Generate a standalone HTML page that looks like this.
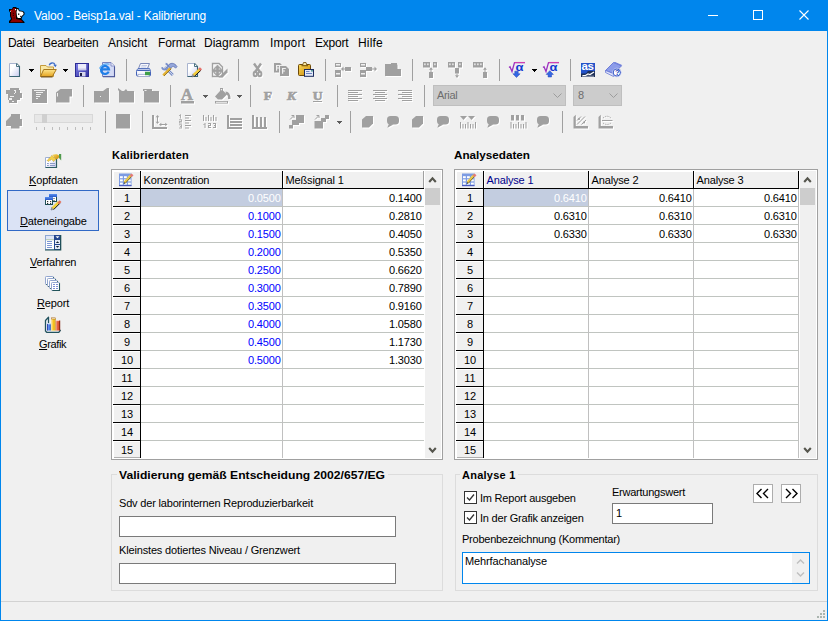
<!DOCTYPE html>
<html><head><meta charset="utf-8"><title>Valoo - Beisp1a.val - Kalibrierung</title>
<style>
html,body{margin:0;padding:0}
body{width:828px;height:621px;position:relative;overflow:hidden;background:#f0f0f0;font-family:"Liberation Sans", sans-serif;font-size:11px}
body>div,body>span,body>svg{position:absolute;display:block}
.t{white-space:nowrap}
u{text-decoration:underline;text-underline-offset:1px;text-decoration-thickness:1px}
</style></head>
<body>
<div style="left:0px;top:0px;width:828px;height:31px;background:#0086ed;"></div>
<span class="t" style="font-size:12px;line-height:16px;color:#fff;top:8px;letter-spacing:-0.153px;left:34px;">Valoo - Beisp1a.val - Kalibrierung</span>
<div style="left:708px;top:15px;width:10px;height:1px;background:#fff;"></div>
<div style="left:753px;top:10px;width:10px;height:10px;border:1px solid #fff;box-sizing:border-box"></div>
<svg style="left:799px;top:10px" width="10" height="10" viewBox="0 0 10 10"><path d="M0.5 0.5 L9.5 9.5 M9.5 0.5 L0.5 9.5" stroke="#fff" stroke-width="1.1" fill="none"/></svg>
<div style="left:0px;top:31px;width:1px;height:590px;background:#0086ed;"></div>
<div style="left:827px;top:31px;width:1px;height:590px;background:#0086ed;"></div>
<div style="left:0px;top:620px;width:828px;height:1px;background:#0086ed;"></div>
<span class="t" style="font-size:12px;line-height:16px;color:#000;top:35px;letter-spacing:-0.323px;left:8px;">Datei</span>
<span class="t" style="font-size:12px;line-height:16px;color:#000;top:35px;letter-spacing:-0.275px;left:43px;">Bearbeiten</span>
<span class="t" style="font-size:12px;line-height:16px;color:#000;top:35px;letter-spacing:-0.023px;left:108px;">Ansicht</span>
<span class="t" style="font-size:12px;line-height:16px;color:#000;top:35px;letter-spacing:-0.119px;left:158px;">Format</span>
<span class="t" style="font-size:12px;line-height:16px;color:#000;top:35px;letter-spacing:-0.005px;left:204px;">Diagramm</span>
<span class="t" style="font-size:12px;line-height:16px;color:#000;top:35px;letter-spacing:0.197px;left:270px;">Import</span>
<span class="t" style="font-size:12px;line-height:16px;color:#000;top:35px;letter-spacing:-0.215px;left:315px;">Export</span>
<span class="t" style="font-size:12px;line-height:16px;color:#000;top:35px;letter-spacing:0.157px;left:358px;">Hilfe</span>
<div style="left:126px;top:59px;width:1px;height:22px;background:#a0a0a0;"></div>
<div style="left:238px;top:59px;width:1px;height:22px;background:#a0a0a0;"></div>
<div style="left:325px;top:59px;width:1px;height:22px;background:#a0a0a0;"></div>
<div style="left:412px;top:59px;width:1px;height:22px;background:#a0a0a0;"></div>
<div style="left:499px;top:59px;width:1px;height:22px;background:#a0a0a0;"></div>
<div style="left:570px;top:59px;width:1px;height:22px;background:#a0a0a0;"></div>
<div style="left:83px;top:85px;width:1px;height:22px;background:#a0a0a0;"></div>
<div style="left:170px;top:85px;width:1px;height:22px;background:#a0a0a0;"></div>
<div style="left:250px;top:85px;width:1px;height:22px;background:#a0a0a0;"></div>
<div style="left:337px;top:85px;width:1px;height:22px;background:#a0a0a0;"></div>
<div style="left:424px;top:85px;width:1px;height:22px;background:#a0a0a0;"></div>
<div style="left:433px;top:85px;width:133px;height:21px;background:#cccccc;border:1px solid #bfbfbf;box-sizing:border-box"></div>
<span class="t" style="font-size:11px;line-height:15px;color:#6d6d6d;top:88px;letter-spacing:-0.343px;left:437px;">Arial</span>
<div style="left:573px;top:85px;width:49px;height:21px;background:#cccccc;border:1px solid #bfbfbf;box-sizing:border-box"></div>
<span class="t" style="font-size:11px;line-height:15px;color:#6d6d6d;top:88px;left:578px;">8</span>
<div style="left:34px;top:114px;width:59px;height:9px;background:#e7e7e7;border:1px solid #d8d8d8;box-sizing:border-box"></div>
<div style="left:42px;top:114px;width:5px;height:9px;background:#cfcfcf;"></div>
<div style="left:36px;top:127px;width:1px;height:3px;background:#bdbdbd;"></div>
<div style="left:44px;top:127px;width:1px;height:3px;background:#bdbdbd;"></div>
<div style="left:52px;top:127px;width:1px;height:3px;background:#bdbdbd;"></div>
<div style="left:59px;top:127px;width:1px;height:3px;background:#bdbdbd;"></div>
<div style="left:67px;top:127px;width:1px;height:3px;background:#bdbdbd;"></div>
<div style="left:75px;top:127px;width:1px;height:3px;background:#bdbdbd;"></div>
<div style="left:82px;top:127px;width:1px;height:3px;background:#bdbdbd;"></div>
<div style="left:90px;top:127px;width:1px;height:3px;background:#bdbdbd;"></div>
<div style="left:105px;top:111px;width:1px;height:22px;background:#a0a0a0;"></div>
<div style="left:142px;top:111px;width:1px;height:22px;background:#a0a0a0;"></div>
<div style="left:279px;top:111px;width:1px;height:22px;background:#a0a0a0;"></div>
<div style="left:350px;top:111px;width:1px;height:22px;background:#a0a0a0;"></div>
<div style="left:562px;top:111px;width:1px;height:22px;background:#a0a0a0;"></div>
<div style="left:7px;top:190px;width:92px;height:41px;background:#dbe3f5;border:1px solid #3169c6;box-sizing:border-box"></div>
<span class="t" style="font-size:11px;line-height:15px;color:#000;top:173px;letter-spacing:-0.151px;left:29px;"><u>K</u>opfdaten</span>
<span class="t" style="font-size:11px;line-height:15px;color:#000;top:214px;letter-spacing:-0.143px;left:20px;"><u>D</u>ateneingabe</span>
<span class="t" style="font-size:11px;line-height:15px;color:#000;top:255px;letter-spacing:-0.156px;left:30px;"><u>V</u>erfahren</span>
<span class="t" style="font-size:11px;line-height:15px;color:#000;top:296px;letter-spacing:-0.155px;left:37px;"><u>R</u>eport</span>
<span class="t" style="font-size:11px;line-height:15px;color:#000;top:337px;letter-spacing:-0.357px;left:39px;"><u>G</u>rafik</span>
<span class="t" style="font-size:11px;line-height:15px;color:#000;top:148px;font-weight:700;letter-spacing:0.217px;left:112px;">Kalibrierdaten</span>
<span class="t" style="font-size:11px;line-height:15px;color:#000;top:148px;font-weight:700;transform:scaleX(1.0625);transform-origin:0 0;left:454px;">Analysedaten</span>
<div style="left:111px;top:169px;width:332px;height:291px;background:#fff;border:1px solid #a0a0a0;box-sizing:border-box"></div>
<div style="left:113px;top:171px;width:311px;height:18px;background:#f0f0f0;"></div>
<div style="left:113px;top:171px;width:27px;height:287px;background:#f0f0f0;"></div>
<div style="left:113px;top:171px;width:310px;height:1px;background:#fff;"></div>
<div style="left:113px;top:171px;width:1px;height:17px;background:#fff;"></div>
<div style="left:141px;top:171px;width:1px;height:17px;background:#fff;"></div>
<div style="left:283px;top:171px;width:1px;height:17px;background:#fff;"></div>
<div style="left:113px;top:188px;width:311px;height:1px;background:#000;"></div>
<div style="left:140px;top:171px;width:1px;height:18px;background:#000;"></div>
<div style="left:282px;top:171px;width:1px;height:18px;background:#000;"></div>
<div style="left:423px;top:171px;width:1px;height:18px;background:#000;"></div>
<div style="left:113px;top:189px;width:27px;height:1px;background:#fff;"></div>
<div style="left:113px;top:189px;width:1px;height:17px;background:#fff;"></div>
<div style="left:113px;top:206px;width:27px;height:1px;background:#000;"></div>
<div style="left:141px;top:206px;width:283px;height:1px;background:#c0c4c0;"></div>
<span class="t" style="font-size:11px;line-height:15px;color:#000;top:191px;left:123.94px;">1</span>
<div style="left:113px;top:207px;width:27px;height:1px;background:#fff;"></div>
<div style="left:113px;top:207px;width:1px;height:17px;background:#fff;"></div>
<div style="left:113px;top:224px;width:27px;height:1px;background:#000;"></div>
<div style="left:141px;top:224px;width:283px;height:1px;background:#c0c4c0;"></div>
<span class="t" style="font-size:11px;line-height:15px;color:#000;top:209px;left:123.94px;">2</span>
<div style="left:113px;top:225px;width:27px;height:1px;background:#fff;"></div>
<div style="left:113px;top:225px;width:1px;height:17px;background:#fff;"></div>
<div style="left:113px;top:242px;width:27px;height:1px;background:#000;"></div>
<div style="left:141px;top:242px;width:283px;height:1px;background:#c0c4c0;"></div>
<span class="t" style="font-size:11px;line-height:15px;color:#000;top:227px;left:123.94px;">3</span>
<div style="left:113px;top:243px;width:27px;height:1px;background:#fff;"></div>
<div style="left:113px;top:243px;width:1px;height:17px;background:#fff;"></div>
<div style="left:113px;top:260px;width:27px;height:1px;background:#000;"></div>
<div style="left:141px;top:260px;width:283px;height:1px;background:#c0c4c0;"></div>
<span class="t" style="font-size:11px;line-height:15px;color:#000;top:245px;left:123.94px;">4</span>
<div style="left:113px;top:261px;width:27px;height:1px;background:#fff;"></div>
<div style="left:113px;top:261px;width:1px;height:17px;background:#fff;"></div>
<div style="left:113px;top:278px;width:27px;height:1px;background:#000;"></div>
<div style="left:141px;top:278px;width:283px;height:1px;background:#c0c4c0;"></div>
<span class="t" style="font-size:11px;line-height:15px;color:#000;top:263px;left:123.94px;">5</span>
<div style="left:113px;top:279px;width:27px;height:1px;background:#fff;"></div>
<div style="left:113px;top:279px;width:1px;height:17px;background:#fff;"></div>
<div style="left:113px;top:296px;width:27px;height:1px;background:#000;"></div>
<div style="left:141px;top:296px;width:283px;height:1px;background:#c0c4c0;"></div>
<span class="t" style="font-size:11px;line-height:15px;color:#000;top:281px;left:123.94px;">6</span>
<div style="left:113px;top:297px;width:27px;height:1px;background:#fff;"></div>
<div style="left:113px;top:297px;width:1px;height:17px;background:#fff;"></div>
<div style="left:113px;top:314px;width:27px;height:1px;background:#000;"></div>
<div style="left:141px;top:314px;width:283px;height:1px;background:#c0c4c0;"></div>
<span class="t" style="font-size:11px;line-height:15px;color:#000;top:299px;left:123.94px;">7</span>
<div style="left:113px;top:315px;width:27px;height:1px;background:#fff;"></div>
<div style="left:113px;top:315px;width:1px;height:17px;background:#fff;"></div>
<div style="left:113px;top:332px;width:27px;height:1px;background:#000;"></div>
<div style="left:141px;top:332px;width:283px;height:1px;background:#c0c4c0;"></div>
<span class="t" style="font-size:11px;line-height:15px;color:#000;top:317px;left:123.94px;">8</span>
<div style="left:113px;top:333px;width:27px;height:1px;background:#fff;"></div>
<div style="left:113px;top:333px;width:1px;height:17px;background:#fff;"></div>
<div style="left:113px;top:350px;width:27px;height:1px;background:#000;"></div>
<div style="left:141px;top:350px;width:283px;height:1px;background:#c0c4c0;"></div>
<span class="t" style="font-size:11px;line-height:15px;color:#000;top:335px;left:123.94px;">9</span>
<div style="left:113px;top:351px;width:27px;height:1px;background:#fff;"></div>
<div style="left:113px;top:351px;width:1px;height:17px;background:#fff;"></div>
<div style="left:113px;top:368px;width:27px;height:1px;background:#000;"></div>
<div style="left:141px;top:368px;width:283px;height:1px;background:#c0c4c0;"></div>
<span class="t" style="font-size:11px;line-height:15px;color:#000;top:353px;left:120.88px;">10</span>
<div style="left:113px;top:369px;width:27px;height:1px;background:#fff;"></div>
<div style="left:113px;top:369px;width:1px;height:17px;background:#fff;"></div>
<div style="left:113px;top:386px;width:27px;height:1px;background:#000;"></div>
<div style="left:141px;top:386px;width:283px;height:1px;background:#c0c4c0;"></div>
<span class="t" style="font-size:11px;line-height:15px;color:#000;top:371px;left:121.29px;">11</span>
<div style="left:113px;top:387px;width:27px;height:1px;background:#fff;"></div>
<div style="left:113px;top:387px;width:1px;height:17px;background:#fff;"></div>
<div style="left:113px;top:404px;width:27px;height:1px;background:#000;"></div>
<div style="left:141px;top:404px;width:283px;height:1px;background:#c0c4c0;"></div>
<span class="t" style="font-size:11px;line-height:15px;color:#000;top:389px;left:120.88px;">12</span>
<div style="left:113px;top:405px;width:27px;height:1px;background:#fff;"></div>
<div style="left:113px;top:405px;width:1px;height:17px;background:#fff;"></div>
<div style="left:113px;top:422px;width:27px;height:1px;background:#000;"></div>
<div style="left:141px;top:422px;width:283px;height:1px;background:#c0c4c0;"></div>
<span class="t" style="font-size:11px;line-height:15px;color:#000;top:407px;left:120.88px;">13</span>
<div style="left:113px;top:423px;width:27px;height:1px;background:#fff;"></div>
<div style="left:113px;top:423px;width:1px;height:17px;background:#fff;"></div>
<div style="left:113px;top:440px;width:27px;height:1px;background:#000;"></div>
<div style="left:141px;top:440px;width:283px;height:1px;background:#c0c4c0;"></div>
<span class="t" style="font-size:11px;line-height:15px;color:#000;top:425px;left:120.88px;">14</span>
<div style="left:113px;top:441px;width:27px;height:1px;background:#fff;"></div>
<div style="left:113px;top:441px;width:1px;height:17px;background:#fff;"></div>
<span class="t" style="font-size:11px;line-height:15px;color:#000;top:443px;left:120.88px;">15</span>
<div style="left:140px;top:171px;width:1px;height:287px;background:#000;"></div>
<div style="left:114px;top:457px;width:26px;height:1px;background:#b0b0b0;"></div>
<div style="left:282px;top:189px;width:1px;height:269px;background:#c0c0c0;"></div>
<div style="left:141px;top:189px;width:141px;height:17px;background:#c3cde0;"></div>
<span class="t" style="font-size:11px;line-height:15px;color:#000;top:173px;letter-spacing:-0.167px;left:143.6px;">Konzentration</span>
<span class="t" style="font-size:11px;line-height:15px;color:#000;top:173px;letter-spacing:-0.174px;left:285.6px;">Meßsignal 1</span>
<span class="t" style="font-size:11px;line-height:15px;color:#fff;top:191px;letter-spacing:-0.112px;right:547.11px;">0.0500</span>
<span class="t" style="font-size:11px;line-height:15px;color:#000;top:191px;letter-spacing:-0.112px;right:406.11px;">0.1400</span>
<span class="t" style="font-size:11px;line-height:15px;color:#0000ff;top:209px;letter-spacing:-0.112px;right:547.11px;">0.1000</span>
<span class="t" style="font-size:11px;line-height:15px;color:#000;top:209px;letter-spacing:-0.112px;right:406.11px;">0.2810</span>
<span class="t" style="font-size:11px;line-height:15px;color:#0000ff;top:227px;letter-spacing:-0.112px;right:547.11px;">0.1500</span>
<span class="t" style="font-size:11px;line-height:15px;color:#000;top:227px;letter-spacing:-0.112px;right:406.11px;">0.4050</span>
<span class="t" style="font-size:11px;line-height:15px;color:#0000ff;top:245px;letter-spacing:-0.112px;right:547.11px;">0.2000</span>
<span class="t" style="font-size:11px;line-height:15px;color:#000;top:245px;letter-spacing:-0.112px;right:406.11px;">0.5350</span>
<span class="t" style="font-size:11px;line-height:15px;color:#0000ff;top:263px;letter-spacing:-0.112px;right:547.11px;">0.2500</span>
<span class="t" style="font-size:11px;line-height:15px;color:#000;top:263px;letter-spacing:-0.112px;right:406.11px;">0.6620</span>
<span class="t" style="font-size:11px;line-height:15px;color:#0000ff;top:281px;letter-spacing:-0.112px;right:547.11px;">0.3000</span>
<span class="t" style="font-size:11px;line-height:15px;color:#000;top:281px;letter-spacing:-0.112px;right:406.11px;">0.7890</span>
<span class="t" style="font-size:11px;line-height:15px;color:#0000ff;top:299px;letter-spacing:-0.112px;right:547.11px;">0.3500</span>
<span class="t" style="font-size:11px;line-height:15px;color:#000;top:299px;letter-spacing:-0.112px;right:406.11px;">0.9160</span>
<span class="t" style="font-size:11px;line-height:15px;color:#0000ff;top:317px;letter-spacing:-0.112px;right:547.11px;">0.4000</span>
<span class="t" style="font-size:11px;line-height:15px;color:#000;top:317px;letter-spacing:-0.112px;right:406.11px;">1.0580</span>
<span class="t" style="font-size:11px;line-height:15px;color:#0000ff;top:335px;letter-spacing:-0.112px;right:547.11px;">0.4500</span>
<span class="t" style="font-size:11px;line-height:15px;color:#000;top:335px;letter-spacing:-0.112px;right:406.11px;">1.1730</span>
<span class="t" style="font-size:11px;line-height:15px;color:#0000ff;top:353px;letter-spacing:-0.112px;right:547.11px;">0.5000</span>
<span class="t" style="font-size:11px;line-height:15px;color:#000;top:353px;letter-spacing:-0.112px;right:406.11px;">1.3030</span>
<div style="left:424px;top:171px;width:17px;height:287px;background:#fff;"></div>
<div style="left:425px;top:171px;width:16px;height:287px;background:#f0f0f0;"></div>
<div style="left:425px;top:188px;width:15px;height:17px;background:#cdcdcd;"></div>
<svg style="left:428px;top:175px" width="9" height="9" viewBox="0 0 9 9"><path d="M1.2 7 L4.5 3.3 L7.8 7" stroke="#55554d" stroke-width="2.1" fill="none"/></svg>
<svg style="left:428px;top:446px" width="9" height="9" viewBox="0 0 9 9"><path d="M1.2 2 L4.5 5.7 L7.8 2" stroke="#55554d" stroke-width="2.1" fill="none"/></svg>
<div style="left:423px;top:171px;width:1px;height:17px;background:#a0a0a0;"></div>
<div style="left:454px;top:169px;width:364px;height:291px;background:#fff;border:1px solid #a0a0a0;box-sizing:border-box"></div>
<div style="left:456px;top:171px;width:343px;height:18px;background:#f0f0f0;"></div>
<div style="left:456px;top:171px;width:27px;height:287px;background:#f0f0f0;"></div>
<div style="left:456px;top:171px;width:342px;height:1px;background:#fff;"></div>
<div style="left:456px;top:171px;width:1px;height:17px;background:#fff;"></div>
<div style="left:484px;top:171px;width:1px;height:17px;background:#fff;"></div>
<div style="left:589px;top:171px;width:1px;height:17px;background:#fff;"></div>
<div style="left:694px;top:171px;width:1px;height:17px;background:#fff;"></div>
<div style="left:456px;top:188px;width:343px;height:1px;background:#000;"></div>
<div style="left:483px;top:171px;width:1px;height:18px;background:#000;"></div>
<div style="left:588px;top:171px;width:1px;height:18px;background:#000;"></div>
<div style="left:693px;top:171px;width:1px;height:18px;background:#000;"></div>
<div style="left:798px;top:171px;width:1px;height:18px;background:#000;"></div>
<div style="left:456px;top:189px;width:27px;height:1px;background:#fff;"></div>
<div style="left:456px;top:189px;width:1px;height:17px;background:#fff;"></div>
<div style="left:456px;top:206px;width:27px;height:1px;background:#000;"></div>
<div style="left:484px;top:206px;width:315px;height:1px;background:#c0c4c0;"></div>
<span class="t" style="font-size:11px;line-height:15px;color:#000;top:191px;left:466.94px;">1</span>
<div style="left:456px;top:207px;width:27px;height:1px;background:#fff;"></div>
<div style="left:456px;top:207px;width:1px;height:17px;background:#fff;"></div>
<div style="left:456px;top:224px;width:27px;height:1px;background:#000;"></div>
<div style="left:484px;top:224px;width:315px;height:1px;background:#c0c4c0;"></div>
<span class="t" style="font-size:11px;line-height:15px;color:#000;top:209px;left:466.94px;">2</span>
<div style="left:456px;top:225px;width:27px;height:1px;background:#fff;"></div>
<div style="left:456px;top:225px;width:1px;height:17px;background:#fff;"></div>
<div style="left:456px;top:242px;width:27px;height:1px;background:#000;"></div>
<div style="left:484px;top:242px;width:315px;height:1px;background:#c0c4c0;"></div>
<span class="t" style="font-size:11px;line-height:15px;color:#000;top:227px;left:466.94px;">3</span>
<div style="left:456px;top:243px;width:27px;height:1px;background:#fff;"></div>
<div style="left:456px;top:243px;width:1px;height:17px;background:#fff;"></div>
<div style="left:456px;top:260px;width:27px;height:1px;background:#000;"></div>
<div style="left:484px;top:260px;width:315px;height:1px;background:#c0c4c0;"></div>
<span class="t" style="font-size:11px;line-height:15px;color:#000;top:245px;left:466.94px;">4</span>
<div style="left:456px;top:261px;width:27px;height:1px;background:#fff;"></div>
<div style="left:456px;top:261px;width:1px;height:17px;background:#fff;"></div>
<div style="left:456px;top:278px;width:27px;height:1px;background:#000;"></div>
<div style="left:484px;top:278px;width:315px;height:1px;background:#c0c4c0;"></div>
<span class="t" style="font-size:11px;line-height:15px;color:#000;top:263px;left:466.94px;">5</span>
<div style="left:456px;top:279px;width:27px;height:1px;background:#fff;"></div>
<div style="left:456px;top:279px;width:1px;height:17px;background:#fff;"></div>
<div style="left:456px;top:296px;width:27px;height:1px;background:#000;"></div>
<div style="left:484px;top:296px;width:315px;height:1px;background:#c0c4c0;"></div>
<span class="t" style="font-size:11px;line-height:15px;color:#000;top:281px;left:466.94px;">6</span>
<div style="left:456px;top:297px;width:27px;height:1px;background:#fff;"></div>
<div style="left:456px;top:297px;width:1px;height:17px;background:#fff;"></div>
<div style="left:456px;top:314px;width:27px;height:1px;background:#000;"></div>
<div style="left:484px;top:314px;width:315px;height:1px;background:#c0c4c0;"></div>
<span class="t" style="font-size:11px;line-height:15px;color:#000;top:299px;left:466.94px;">7</span>
<div style="left:456px;top:315px;width:27px;height:1px;background:#fff;"></div>
<div style="left:456px;top:315px;width:1px;height:17px;background:#fff;"></div>
<div style="left:456px;top:332px;width:27px;height:1px;background:#000;"></div>
<div style="left:484px;top:332px;width:315px;height:1px;background:#c0c4c0;"></div>
<span class="t" style="font-size:11px;line-height:15px;color:#000;top:317px;left:466.94px;">8</span>
<div style="left:456px;top:333px;width:27px;height:1px;background:#fff;"></div>
<div style="left:456px;top:333px;width:1px;height:17px;background:#fff;"></div>
<div style="left:456px;top:350px;width:27px;height:1px;background:#000;"></div>
<div style="left:484px;top:350px;width:315px;height:1px;background:#c0c4c0;"></div>
<span class="t" style="font-size:11px;line-height:15px;color:#000;top:335px;left:466.94px;">9</span>
<div style="left:456px;top:351px;width:27px;height:1px;background:#fff;"></div>
<div style="left:456px;top:351px;width:1px;height:17px;background:#fff;"></div>
<div style="left:456px;top:368px;width:27px;height:1px;background:#000;"></div>
<div style="left:484px;top:368px;width:315px;height:1px;background:#c0c4c0;"></div>
<span class="t" style="font-size:11px;line-height:15px;color:#000;top:353px;left:463.88px;">10</span>
<div style="left:456px;top:369px;width:27px;height:1px;background:#fff;"></div>
<div style="left:456px;top:369px;width:1px;height:17px;background:#fff;"></div>
<div style="left:456px;top:386px;width:27px;height:1px;background:#000;"></div>
<div style="left:484px;top:386px;width:315px;height:1px;background:#c0c4c0;"></div>
<span class="t" style="font-size:11px;line-height:15px;color:#000;top:371px;left:464.29px;">11</span>
<div style="left:456px;top:387px;width:27px;height:1px;background:#fff;"></div>
<div style="left:456px;top:387px;width:1px;height:17px;background:#fff;"></div>
<div style="left:456px;top:404px;width:27px;height:1px;background:#000;"></div>
<div style="left:484px;top:404px;width:315px;height:1px;background:#c0c4c0;"></div>
<span class="t" style="font-size:11px;line-height:15px;color:#000;top:389px;left:463.88px;">12</span>
<div style="left:456px;top:405px;width:27px;height:1px;background:#fff;"></div>
<div style="left:456px;top:405px;width:1px;height:17px;background:#fff;"></div>
<div style="left:456px;top:422px;width:27px;height:1px;background:#000;"></div>
<div style="left:484px;top:422px;width:315px;height:1px;background:#c0c4c0;"></div>
<span class="t" style="font-size:11px;line-height:15px;color:#000;top:407px;left:463.88px;">13</span>
<div style="left:456px;top:423px;width:27px;height:1px;background:#fff;"></div>
<div style="left:456px;top:423px;width:1px;height:17px;background:#fff;"></div>
<div style="left:456px;top:440px;width:27px;height:1px;background:#000;"></div>
<div style="left:484px;top:440px;width:315px;height:1px;background:#c0c4c0;"></div>
<span class="t" style="font-size:11px;line-height:15px;color:#000;top:425px;left:463.88px;">14</span>
<div style="left:456px;top:441px;width:27px;height:1px;background:#fff;"></div>
<div style="left:456px;top:441px;width:1px;height:17px;background:#fff;"></div>
<span class="t" style="font-size:11px;line-height:15px;color:#000;top:443px;left:463.88px;">15</span>
<div style="left:483px;top:171px;width:1px;height:287px;background:#000;"></div>
<div style="left:457px;top:457px;width:26px;height:1px;background:#b0b0b0;"></div>
<div style="left:588px;top:189px;width:1px;height:269px;background:#c0c0c0;"></div>
<div style="left:693px;top:189px;width:1px;height:269px;background:#c0c0c0;"></div>
<div style="left:798px;top:189px;width:1px;height:269px;background:#c0c0c0;"></div>
<div style="left:484px;top:189px;width:104px;height:17px;background:#c3cde0;"></div>
<span class="t" style="font-size:11px;line-height:15px;color:#00008b;top:173px;letter-spacing:-0.172px;left:486.6px;">Analyse 1</span>
<span class="t" style="font-size:11px;line-height:15px;color:#000;top:173px;letter-spacing:-0.172px;left:591.6px;">Analyse 2</span>
<span class="t" style="font-size:11px;line-height:15px;color:#000;top:173px;letter-spacing:-0.172px;left:696.6px;">Analyse 3</span>
<span class="t" style="font-size:11px;line-height:15px;color:#fff;top:191px;letter-spacing:-0.112px;right:241.11px;">0.6410</span>
<span class="t" style="font-size:11px;line-height:15px;color:#000;top:191px;letter-spacing:-0.112px;right:136.11px;">0.6410</span>
<span class="t" style="font-size:11px;line-height:15px;color:#000;top:191px;letter-spacing:-0.112px;right:31.11px;">0.6410</span>
<span class="t" style="font-size:11px;line-height:15px;color:#000;top:209px;letter-spacing:-0.112px;right:241.11px;">0.6310</span>
<span class="t" style="font-size:11px;line-height:15px;color:#000;top:209px;letter-spacing:-0.112px;right:136.11px;">0.6310</span>
<span class="t" style="font-size:11px;line-height:15px;color:#000;top:209px;letter-spacing:-0.112px;right:31.11px;">0.6310</span>
<span class="t" style="font-size:11px;line-height:15px;color:#000;top:227px;letter-spacing:-0.112px;right:241.11px;">0.6330</span>
<span class="t" style="font-size:11px;line-height:15px;color:#000;top:227px;letter-spacing:-0.112px;right:136.11px;">0.6330</span>
<span class="t" style="font-size:11px;line-height:15px;color:#000;top:227px;letter-spacing:-0.112px;right:31.11px;">0.6330</span>
<div style="left:799px;top:171px;width:17px;height:287px;background:#fff;"></div>
<div style="left:800px;top:171px;width:16px;height:287px;background:#f0f0f0;"></div>
<div style="left:800px;top:188px;width:15px;height:17px;background:#cdcdcd;"></div>
<svg style="left:803px;top:175px" width="9" height="9" viewBox="0 0 9 9"><path d="M1.2 7 L4.5 3.3 L7.8 7" stroke="#55554d" stroke-width="2.1" fill="none"/></svg>
<svg style="left:803px;top:446px" width="9" height="9" viewBox="0 0 9 9"><path d="M1.2 2 L4.5 5.7 L7.8 2" stroke="#55554d" stroke-width="2.1" fill="none"/></svg>
<div style="left:111px;top:474px;width:332px;height:117px;border:1px solid #dcdcdc;box-sizing:border-box"></div>
<div style="left:117px;top:468px;width:271px;height:14px;background:#f0f0f0;"></div>
<span class="t" style="font-size:11px;line-height:15px;color:#000;top:468px;font-weight:700;transform:scaleX(1.1016);transform-origin:0 0;left:119px;">Validierung gemäß Entscheidung 2002/657/EG</span>
<span class="t" style="font-size:11px;line-height:15px;color:#000;top:496px;letter-spacing:-0.179px;left:119px;">Sdv der laborinternen Reproduzierbarkeit</span>
<div style="left:119px;top:516px;width:277px;height:21px;background:#fff;border:1px solid #7a7a7a;box-sizing:border-box"></div>
<span class="t" style="font-size:11px;line-height:15px;color:#000;top:543px;letter-spacing:-0.160px;left:119px;">Kleinstes dotiertes Niveau / Grenzwert</span>
<div style="left:119px;top:563px;width:277px;height:21px;background:#fff;border:1px solid #7a7a7a;box-sizing:border-box"></div>
<div style="left:455px;top:474px;width:363px;height:117px;border:1px solid #dcdcdc;box-sizing:border-box"></div>
<div style="left:460px;top:468px;width:58px;height:14px;background:#f0f0f0;"></div>
<span class="t" style="font-size:11px;line-height:15px;color:#000;top:468px;font-weight:700;letter-spacing:0.258px;left:462px;">Analyse 1</span>
<div style="left:464px;top:491px;width:13px;height:13px;background:#fff;border:1px solid #333;box-sizing:border-box"></div>
<svg style="left:464px;top:491px" width="13" height="13" viewBox="0 0 13 13"><path d="M3 6.5 L5.5 9 L10 3.5" stroke="#333" stroke-width="1.3" fill="none"/></svg>
<div style="left:464px;top:511px;width:13px;height:13px;background:#fff;border:1px solid #333;box-sizing:border-box"></div>
<svg style="left:464px;top:511px" width="13" height="13" viewBox="0 0 13 13"><path d="M3 6.5 L5.5 9 L10 3.5" stroke="#333" stroke-width="1.3" fill="none"/></svg>
<span class="t" style="font-size:11px;line-height:15px;color:#000;top:491px;letter-spacing:-0.221px;left:480px;">Im Report ausgeben</span>
<span class="t" style="font-size:11px;line-height:15px;color:#000;top:511px;letter-spacing:-0.211px;left:480px;">In der Grafik anzeigen</span>
<span class="t" style="font-size:11px;line-height:15px;color:#000;top:485px;letter-spacing:-0.244px;left:612px;">Erwartungswert</span>
<div style="left:612px;top:503px;width:101px;height:21px;background:#fff;border:1px solid #7a7a7a;box-sizing:border-box"></div>
<span class="t" style="font-size:11px;line-height:15px;color:#000;top:506px;left:616px;">1</span>
<div style="left:753px;top:484px;width:20px;height:19px;background:#fff;border:1px solid #adadad;box-sizing:border-box"></div>
<svg style="left:753px;top:484px" width="20" height="19" viewBox="0 0 20 19"><path d="M8.5 5 L4 9.5 L8.5 14 M15 5 L10.5 9.5 L15 14" stroke="#000" stroke-width="1.4" fill="none"/></svg>
<div style="left:781px;top:484px;width:20px;height:19px;background:#fff;border:1px solid #adadad;box-sizing:border-box"></div>
<svg style="left:781px;top:484px" width="20" height="19" viewBox="0 0 20 19"><path d="M5 5 L9.5 9.5 L5 14 M11.5 5 L16 9.5 L11.5 14" stroke="#000" stroke-width="1.4" fill="none"/></svg>
<span class="t" style="font-size:11px;line-height:15px;color:#000;top:532px;letter-spacing:-0.245px;left:462px;">Probenbezeichnung (Kommentar)</span>
<div style="left:462px;top:552px;width:348px;height:32px;background:#fff;border:1px solid #0086ed;box-sizing:border-box"></div>
<span class="t" style="font-size:11px;line-height:15px;color:#000;top:554px;letter-spacing:-0.119px;left:465px;">Mehrfachanalyse</span>
<div style="left:792px;top:553px;width:17px;height:30px;background:#f0f0f0;"></div>
<svg style="left:796px;top:557px" width="9" height="9" viewBox="0 0 9 9"><path d="M1 6.5 L4.5 3 L8 6.5" stroke="#c0c0c0" stroke-width="1.5" fill="none"/></svg>
<svg style="left:796px;top:570px" width="9" height="9" viewBox="0 0 9 9"><path d="M1 2.5 L4.5 6 L8 2.5" stroke="#c0c0c0" stroke-width="1.5" fill="none"/></svg>
<div style="left:1px;top:601px;width:826px;height:1px;background:#d2d2d2;"></div>
<div style="left:823px;top:610px;width:2px;height:2px;background:#abb5af;"></div>
<div style="left:820px;top:613px;width:2px;height:2px;background:#abb5af;"></div>
<div style="left:823px;top:613px;width:2px;height:2px;background:#abb5af;"></div>
<div style="left:817px;top:616px;width:2px;height:2px;background:#abb5af;"></div>
<div style="left:820px;top:616px;width:2px;height:2px;background:#abb5af;"></div>
<div style="left:823px;top:616px;width:2px;height:2px;background:#abb5af;"></div>
<svg style="left:0;top:0" width="828" height="621" viewBox="0 0 828 621" shape-rendering="crispEdges"><g fill="#000"><rect x="29" y="69" width="5" height="1" stroke="none" /><rect x="30" y="70" width="3" height="1" stroke="none" /><rect x="31" y="71" width="1" height="1" stroke="none" /></g><g fill="#000"><rect x="63" y="69" width="5" height="1" stroke="none" /><rect x="64" y="70" width="3" height="1" stroke="none" /><rect x="65" y="71" width="1" height="1" stroke="none" /></g><g fill="#000"><rect x="532" y="69" width="5" height="1" stroke="none" /><rect x="533" y="70" width="3" height="1" stroke="none" /><rect x="534" y="71" width="1" height="1" stroke="none" /></g><g transform="translate(1,1)" fill="#fff" stroke="#fff"><path d="M10 88H19V90H20V93H22V98H20V100H17V103H9V100H8V94H6V90H10Z" stroke="none"/><rect x="13.5" y="90" width="2.5" height="1" stroke="none" fill="#f0f0f0"/><rect x="15" y="91" width="1" height="1.5" stroke="none" fill="#f0f0f0"/><rect x="14" y="92.5" width="1" height="1.5" stroke="none" fill="#f0f0f0"/><rect x="10" y="96" width="4" height="1" stroke="none" fill="#f0f0f0"/><rect x="9" y="98" width="3" height="1.5" stroke="none" fill="#f0f0f0"/><rect x="12" y="101" width="1.5" height="1" stroke="none" fill="#f0f0f0"/></g><g fill="#a0a0a0" stroke="#a0a0a0"><path d="M10 88H19V90H20V93H22V98H20V100H17V103H9V100H8V94H6V90H10Z" stroke="none"/><rect x="13.5" y="90" width="2.5" height="1" stroke="none" fill="#f0f0f0"/><rect x="15" y="91" width="1" height="1.5" stroke="none" fill="#f0f0f0"/><rect x="14" y="92.5" width="1" height="1.5" stroke="none" fill="#f0f0f0"/><rect x="10" y="96" width="4" height="1" stroke="none" fill="#f0f0f0"/><rect x="9" y="98" width="3" height="1.5" stroke="none" fill="#f0f0f0"/><rect x="12" y="101" width="1.5" height="1" stroke="none" fill="#f0f0f0"/></g><g transform="translate(1,1)" fill="#fff" stroke="#fff"><rect x="32" y="89" width="15" height="14" stroke="none" /><rect x="34" y="90" width="11" height="1" stroke="none" fill="#f0f0f0"/><rect x="36" y="92" width="7" height="1" stroke="none" fill="#f0f0f0"/><rect x="36" y="94" width="5" height="1" stroke="none" fill="#f0f0f0"/><rect x="36" y="96" width="4" height="1" stroke="none" fill="#f0f0f0"/><rect x="36" y="98" width="2" height="1" stroke="none" fill="#f0f0f0"/></g><g fill="#a0a0a0" stroke="#a0a0a0"><rect x="32" y="89" width="15" height="14" stroke="none" /><rect x="34" y="90" width="11" height="1" stroke="none" fill="#f0f0f0"/><rect x="36" y="92" width="7" height="1" stroke="none" fill="#f0f0f0"/><rect x="36" y="94" width="5" height="1" stroke="none" fill="#f0f0f0"/><rect x="36" y="96" width="4" height="1" stroke="none" fill="#f0f0f0"/><rect x="36" y="98" width="2" height="1" stroke="none" fill="#f0f0f0"/></g><g fill="#5c5c5c"><rect x="203" y="95" width="5" height="1" stroke="none" /><rect x="204" y="96" width="3" height="1" stroke="none" /><rect x="205" y="97" width="1" height="1" stroke="none" /></g><g fill="#5c5c5c"><rect x="237" y="95" width="5" height="1" stroke="none" /><rect x="238" y="96" width="3" height="1" stroke="none" /><rect x="239" y="97" width="1" height="1" stroke="none" /></g><g transform="translate(1,1)" fill="#fff" stroke="#fff"><rect x="348" y="90" width="14" height="1" stroke="none" /><rect x="348" y="92" width="10" height="1" stroke="none" /><rect x="348" y="94" width="14" height="1" stroke="none" /><rect x="348" y="96" width="10" height="1" stroke="none" /><rect x="348" y="98" width="14" height="1" stroke="none" /><rect x="348" y="100" width="10" height="1" stroke="none" /></g><g fill="#a0a0a0" stroke="#a0a0a0"><rect x="348" y="90" width="14" height="1" stroke="none" /><rect x="348" y="92" width="10" height="1" stroke="none" /><rect x="348" y="94" width="14" height="1" stroke="none" /><rect x="348" y="96" width="10" height="1" stroke="none" /><rect x="348" y="98" width="14" height="1" stroke="none" /><rect x="348" y="100" width="10" height="1" stroke="none" /></g><g transform="translate(1,1)" fill="#fff" stroke="#fff"><rect x="373" y="90" width="14" height="1" stroke="none" /><rect x="375" y="92" width="10" height="1" stroke="none" /><rect x="373" y="94" width="14" height="1" stroke="none" /><rect x="375" y="96" width="10" height="1" stroke="none" /><rect x="373" y="98" width="14" height="1" stroke="none" /><rect x="375" y="100" width="10" height="1" stroke="none" /></g><g fill="#a0a0a0" stroke="#a0a0a0"><rect x="373" y="90" width="14" height="1" stroke="none" /><rect x="375" y="92" width="10" height="1" stroke="none" /><rect x="373" y="94" width="14" height="1" stroke="none" /><rect x="375" y="96" width="10" height="1" stroke="none" /><rect x="373" y="98" width="14" height="1" stroke="none" /><rect x="375" y="100" width="10" height="1" stroke="none" /></g><g transform="translate(1,1)" fill="#fff" stroke="#fff"><rect x="398" y="90" width="14" height="1" stroke="none" /><rect x="402" y="92" width="10" height="1" stroke="none" /><rect x="398" y="94" width="14" height="1" stroke="none" /><rect x="402" y="96" width="10" height="1" stroke="none" /><rect x="398" y="98" width="14" height="1" stroke="none" /><rect x="402" y="100" width="10" height="1" stroke="none" /></g><g fill="#a0a0a0" stroke="#a0a0a0"><rect x="398" y="90" width="14" height="1" stroke="none" /><rect x="402" y="92" width="10" height="1" stroke="none" /><rect x="398" y="94" width="14" height="1" stroke="none" /><rect x="402" y="96" width="10" height="1" stroke="none" /><rect x="398" y="98" width="14" height="1" stroke="none" /><rect x="402" y="100" width="10" height="1" stroke="none" /></g><g fill="#5c5c5c"><rect x="337" y="121" width="5" height="1" stroke="none" /><rect x="338" y="122" width="3" height="1" stroke="none" /><rect x="339" y="123" width="1" height="1" stroke="none" /></g></svg>
<svg style="left:0;top:0" width="828" height="621" viewBox="0 0 828 621"><defs>
<linearGradient id="gDoc" x1="0" y1="0" x2="1" y2="1"><stop offset=".35" stop-color="#fff"/><stop offset="1" stop-color="#c4c9ee"/></linearGradient>
<linearGradient id="gFold" x1="0" y1="0" x2="0" y2="1"><stop offset="0" stop-color="#fde58d"/><stop offset="1" stop-color="#e5a41f"/></linearGradient>
<linearGradient id="gSave" x1="0" y1="0" x2="1" y2="1"><stop offset="0" stop-color="#8080e8"/><stop offset="1" stop-color="#3030a0"/></linearGradient>
<linearGradient id="gGold" x1="0" y1="0" x2="1" y2="1"><stop offset="0" stop-color="#fbd95a"/><stop offset="1" stop-color="#c98808"/></linearGradient>
<linearGradient id="gBar" x1="0" y1="0" x2="1" y2="0"><stop offset="0" stop-color="#fff" stop-opacity=".55"/><stop offset=".5" stop-color="#fff" stop-opacity="0"/><stop offset="1" stop-color="#000" stop-opacity=".25"/></linearGradient>
<linearGradient id="gBlueT" x1="0" y1="0" x2="0" y2="1"><stop offset="0" stop-color="#5a90f0"/><stop offset="1" stop-color="#2858c8"/></linearGradient>
</defs><g transform="translate(9,7)"><path d="M4 0H7L8 1H9.5L10.5 3.5L14 4L15.5 5.5V7.5L13.5 9.5L12.5 12L15.5 15V16H0V14L2 12L1 9V5.5L0 4V2H3Z" fill="#000"/><path d="M4 1H6.8L7 12L12 13L14.2 15.2H1L2.2 13.5L3.2 12L2 9V5L1.2 3.2H3.2Z" fill="#8b0000"/><path d="M8.2 2.2L9 2L10 4.2L13.5 4.8L14.5 6V7.2L12.8 9L11.5 11H8.8L8 9.5L7.5 5Z" fill="#fff"/><rect x="9" y="6.5" width="1.3" height="1.3" fill="#000"/><rect x="11.2" y="8.8" width="1.3" height="1.2" fill="#000"/><rect x="3.8" y="5.8" width="1.2" height="1.2" fill="#300"/><rect x="3.8" y="7.8" width="1.2" height="1.2" fill="#300"/><rect x="4.5" y="10.5" width="1.2" height="1" fill="#300"/><rect x="6" y="2" width="1.2" height="1.2" fill="#fff"/><rect x="1" y="3.8" width="1" height="1" fill="#ddd"/><rect x="2" y="2.8" width="1" height="1" fill="#f00"/></g><path d="M9.5 63.5H16.5L19.5 66.5V76.5H9.5Z" fill="url(#gDoc)" stroke="#a9b4cf"/><path d="M16.5 63.5L19.5 66.5V76.5H9.5" fill="none" stroke="#3a6474" stroke-width="1.1"/><path d="M16.5 63.7V66.5H19.3" fill="#fff" stroke="#3a6474" stroke-width=".9"/><path d="M40.5 65.5H46L47.5 67H53.5V76.5H40.5Z" fill="#f9e7a4" stroke="#c49a3a"/><path d="M43.7 69.5H56.3L52.3 76.5H40.5Z" fill="url(#gFold)" stroke="#a8781e"/><path d="M41 77H52.5" stroke="#6a4a14" stroke-width=".9"/><path d="M49.3 65.2C50 62.5 53.8 62 55 64.8" fill="none" stroke="#3c6cc8" stroke-width="1.4"/><path d="M53.2 64.8h3.6l-1.3 2.4z" fill="#3c6cc8"/><rect x="75.5" y="63.5" width="13" height="13" fill="url(#gSave)" stroke="#2c2c94"/><rect x="78" y="64" width="8.2" height="6.2" fill="#ececfb"/><rect x="78" y="68.5" width="8.2" height="1.7" fill="#c9c9ea"/><rect x="79" y="72" width="6.5" height="4.5" fill="#d6d6ea"/><rect x="80" y="73" width="2" height="3" fill="#1c1c44"/><path d="M102.5 62.5H111L114.5 66V76.5H102.5Z" fill="#d3daf5" stroke="#7884c0"/><path d="M114.5 66.5V76.8H103" fill="none" stroke="#4a5698" stroke-width="1.1"/><path d="M111 62.7V66H114.3" fill="#eef1fc" stroke="#7884c0" stroke-width=".8"/><path d="M108.7 71.6A4 4 0 1 1 109 69.4H101.5" fill="none" stroke="#1f7fe8" stroke-width="2.2"/><path d="M99.4 68.5C101 65 106 63 109.5 64.2" fill="none" stroke="#55aaf2" stroke-width="1.1"/><path d="M140.5 63.5H149.5L147.5 68.5H138.5Z" fill="#f6f7fd" stroke="#7a88b8"/><path d="M141.5 65.5h5.5M140.8 67h5.5" stroke="#b8c0dc" stroke-width=".8"/><path d="M138 68.5H149.5L150.5 70.5H136.5Z" fill="#bcc8e8" stroke="#4464b8" stroke-width=".8"/><rect x="136.5" y="70.5" width="14" height="5.5" rx="1" fill="#eef1fb" stroke="#4464b8"/><rect x="138" y="74.5" width="11" height="2" fill="#fff" stroke="#8a96c0" stroke-width=".6"/><rect x="145" y="71.8" width="5" height="3.4" fill="#3f9f48"/><rect x="137.5" y="71.5" width="7" height="1" fill="#fff"/><path d="M172.8 75L165 67.2" stroke="#6f86c2" stroke-width="2.6"/><path d="M172.8 75L165 67.2" stroke="#eef1fb" stroke-width=".9"/><path d="M162 67.2A3 3 0 1 0 165.6 63.6" fill="none" stroke="#7c92cc" stroke-width="1.8"/><path d="M163.2 75.3L170.6 67.9" stroke="#e3b232" stroke-width="2.4"/><path d="M164 76L171.3 68.7" stroke="#7a5c10" stroke-width=".7"/><path d="M168 65.8C170 62.4 174.5 62.4 177 66.6L175.6 68.2C174 66 172.2 66 170.8 68.2Z" fill="#94a6da" stroke="#5066aa" stroke-width=".7"/><path d="M187.5 63.5H194.5L197.5 66.5V76.5H187.5Z" fill="url(#gDoc)" stroke="#a9b4cf"/><path d="M194.5 63.5L197.5 66.5V76.5H187.5" fill="none" stroke="#3a6474" stroke-width="1.1"/><path d="M194.5 63.7V66.5H197.3" fill="#fff" stroke="#3a6474" stroke-width=".9"/><path d="M193.5 75.3L200 69.2" stroke="#f1cb3c" stroke-width="2.8"/><path d="M194.5 76.3L201 70.2" stroke="#151515" stroke-width="1"/><path d="M199.4 69.8L201 68.2" stroke="#e6706a" stroke-width="3"/><path d="M191.9 76.89999999999999l.8-2.4 1.7 1.7z" fill="#e8e8e8" stroke="#333" stroke-width=".5"/><g transform="translate(1,1)" fill="#fff" stroke="#fff"><path d="M212.5 63.5H219L222.5 67V76.5H212.5Z" fill="none" stroke-width="1.4"/><path d="M217.5 65l3 3.2h-1.8v1.6h1.6v-1.8l2.6 2.8-2.6 2.8v-1.8h-1.6v1.6h1.8l-3 3.2-3-3.2h1.8v-1.6h-1.6v1.8l-2.4-2.8 2.4-2.8v1.8h1.6v-1.6h-1.8z" stroke-width=".6"/><path d="M218.5 77.5L227.5 68.5V72.5L222.5 77.5Z" stroke="none"/></g><g fill="#a0a0a0" stroke="#a0a0a0"><path d="M212.5 63.5H219L222.5 67V76.5H212.5Z" fill="none" stroke-width="1.4"/><path d="M217.5 65l3 3.2h-1.8v1.6h1.6v-1.8l2.6 2.8-2.6 2.8v-1.8h-1.6v1.6h1.8l-3 3.2-3-3.2h1.8v-1.6h-1.6v1.8l-2.4-2.8 2.4-2.8v1.8h1.6v-1.6h-1.8z" stroke-width=".6"/><path d="M218.5 77.5L227.5 68.5V72.5L222.5 77.5Z" stroke="none"/></g><g transform="translate(1,1)" fill="#fff" stroke="#fff"><path d="M254 63.5L260.3 72.5M261 63.5L254.7 72.5" fill="none" stroke-width="2.4"/><ellipse cx="255.3" cy="74" rx="1.6" ry="2.2" fill="none" stroke-width="2"/><ellipse cx="259.8" cy="74" rx="1.6" ry="2.2" fill="none" stroke-width="2"/></g><g fill="#a0a0a0" stroke="#a0a0a0"><path d="M254 63.5L260.3 72.5M261 63.5L254.7 72.5" fill="none" stroke-width="2.4"/><ellipse cx="255.3" cy="74" rx="1.6" ry="2.2" fill="none" stroke-width="2"/><ellipse cx="259.8" cy="74" rx="1.6" ry="2.2" fill="none" stroke-width="2"/></g><g transform="translate(1,1)" fill="#fff" stroke="#fff"><path d="M274 63H280L283 66V72.5H274Z" stroke="none"/></g><g fill="#a0a0a0" stroke="#a0a0a0"><path d="M274 63H280L283 66V72.5H274Z" stroke="none"/></g><path d="M279 65H286.5L290 68.5V77H279Z" fill="#f0f0f0"/><g transform="translate(1,1)" fill="#fff" stroke="#fff"><path d="M280 66H286L289 69V76H280Z" stroke="none"/></g><g fill="#a0a0a0" stroke="#a0a0a0"><path d="M280 66H286L289 69V76H280Z" stroke="none"/></g><g fill="#f0f0f0"><path d="M276 65h3.8v1.1h-2.6v1.3h1.8v1.1h-1.8v2.3H276z" stroke="none"/><path d="M282 68h3.8v1.1h-2.6v1.3h1.8v1.1h-1.8v2.3H282z" stroke="none"/></g><rect x="298.5" y="64.5" width="12" height="11" rx="1" fill="url(#gGold)" stroke="#6e4a08"/><path d="M302.5 65.5L303.5 62.5H306L307 65.5Z" fill="#f6e6a6" stroke="#6e4a08" stroke-width=".8"/><rect x="301.5" y="65" width="6.5" height="1.3" fill="#8a6410"/><rect x="304.5" y="69.5" width="9" height="6.8" fill="#e4eaf9" stroke="#1c2c5e"/><path d="M306 71.5h3.5M306 73.5h6" stroke="#6d84c0" stroke-width="1"/><rect x="311" y="70" width="2" height="1.6" fill="#5ea0a0"/><g transform="translate(1,1)" fill="#fff" stroke="#fff"><rect x="335" y="63" width="6" height="4" stroke="none" /><rect x="336" y="64" width="4" height="1.5" stroke="none" fill="#f0f0f0"/><rect x="335" y="70" width="6" height="7" stroke="none" /><rect x="336" y="73" width="4" height="1.5" stroke="none" fill="#f0f0f0"/><rect x="345" y="67" width="6" height="4" stroke="none" /><rect x="342" y="68.5" width="3" height="1" stroke="none" /><path d="M341 69L343.5 66.5V71.5Z" stroke="none"/></g><g fill="#a0a0a0" stroke="#a0a0a0"><rect x="335" y="63" width="6" height="4" stroke="none" /><rect x="336" y="64" width="4" height="1.5" stroke="none" fill="#f0f0f0"/><rect x="335" y="70" width="6" height="7" stroke="none" /><rect x="336" y="73" width="4" height="1.5" stroke="none" fill="#f0f0f0"/><rect x="345" y="67" width="6" height="4" stroke="none" /><rect x="342" y="68.5" width="3" height="1" stroke="none" /><path d="M341 69L343.5 66.5V71.5Z" stroke="none"/></g><g transform="translate(1,1)" fill="#fff" stroke="#fff"><rect x="360" y="63" width="6" height="4" stroke="none" /><rect x="361" y="64" width="4" height="1.5" stroke="none" fill="#f0f0f0"/><rect x="360" y="70" width="6" height="7" stroke="none" /><rect x="361" y="73" width="4" height="1.5" stroke="none" fill="#f0f0f0"/><rect x="366" y="67" width="6" height="4" stroke="none" /><rect x="372" y="68.5" width="3" height="1" stroke="none" /><path d="M377 69L374.5 66.5V71.5Z" stroke="none"/></g><g fill="#a0a0a0" stroke="#a0a0a0"><rect x="360" y="63" width="6" height="4" stroke="none" /><rect x="361" y="64" width="4" height="1.5" stroke="none" fill="#f0f0f0"/><rect x="360" y="70" width="6" height="7" stroke="none" /><rect x="361" y="73" width="4" height="1.5" stroke="none" fill="#f0f0f0"/><rect x="366" y="67" width="6" height="4" stroke="none" /><rect x="372" y="68.5" width="3" height="1" stroke="none" /><path d="M377 69L374.5 66.5V71.5Z" stroke="none"/></g><g transform="translate(1,1)" fill="#fff" stroke="#fff"><path d="M385 64H391V63H397V64.5H397.5V69H401V76H385Z" stroke="none"/></g><g fill="#a0a0a0" stroke="#a0a0a0"><path d="M385 64H391V63H397V64.5H397.5V69H401V76H385Z" stroke="none"/></g><g transform="translate(1,1)" fill="#fff" stroke="#fff"><rect x="423" y="62" width="7" height="5.5" stroke="none" /><rect x="424.2" y="63.4" width="1.4" height="1.8" stroke="none" fill="#f0f0f0"/><rect x="427.2" y="63.4" width="1.4" height="1.8" stroke="none" fill="#f0f0f0"/><rect x="433" y="62" width="4" height="5.5" stroke="none" /><rect x="434.2" y="63.4" width="1.4" height="1.8" stroke="none" fill="#f0f0f0"/><rect x="429" y="72" width="4" height="6" stroke="none" /><rect x="430.5" y="69" width="1" height="3" stroke="none" /><path d="M431 67.3L429 69.8H433Z" stroke="none"/></g><g fill="#a0a0a0" stroke="#a0a0a0"><rect x="423" y="62" width="7" height="5.5" stroke="none" /><rect x="424.2" y="63.4" width="1.4" height="1.8" stroke="none" fill="#f0f0f0"/><rect x="427.2" y="63.4" width="1.4" height="1.8" stroke="none" fill="#f0f0f0"/><rect x="433" y="62" width="4" height="5.5" stroke="none" /><rect x="434.2" y="63.4" width="1.4" height="1.8" stroke="none" fill="#f0f0f0"/><rect x="429" y="72" width="4" height="6" stroke="none" /><rect x="430.5" y="69" width="1" height="3" stroke="none" /><path d="M431 67.3L429 69.8H433Z" stroke="none"/></g><g transform="translate(1,1)" fill="#fff" stroke="#fff"><rect x="448" y="62" width="7" height="5.5" stroke="none" /><rect x="449.2" y="63.4" width="1.4" height="1.8" stroke="none" fill="#f0f0f0"/><rect x="452.2" y="63.4" width="1.4" height="1.8" stroke="none" fill="#f0f0f0"/><rect x="458" y="62" width="4" height="5.5" stroke="none" /><rect x="459.2" y="63.4" width="1.4" height="1.8" stroke="none" fill="#f0f0f0"/><rect x="455" y="68" width="4" height="5.5" stroke="none" /><rect x="456.5" y="73.5" width="1" height="2" stroke="none" /><path d="M457 78L455 75.3H459Z" stroke="none"/></g><g fill="#a0a0a0" stroke="#a0a0a0"><rect x="448" y="62" width="7" height="5.5" stroke="none" /><rect x="449.2" y="63.4" width="1.4" height="1.8" stroke="none" fill="#f0f0f0"/><rect x="452.2" y="63.4" width="1.4" height="1.8" stroke="none" fill="#f0f0f0"/><rect x="458" y="62" width="4" height="5.5" stroke="none" /><rect x="459.2" y="63.4" width="1.4" height="1.8" stroke="none" fill="#f0f0f0"/><rect x="455" y="68" width="4" height="5.5" stroke="none" /><rect x="456.5" y="73.5" width="1" height="2" stroke="none" /><path d="M457 78L455 75.3H459Z" stroke="none"/></g><g transform="translate(1,1)" fill="#fff" stroke="#fff"><rect x="473" y="62" width="10" height="5.5" stroke="none" /><rect x="474.2" y="63.4" width="1.4" height="1.8" stroke="none" fill="#f0f0f0"/><rect x="477.2" y="63.4" width="1.4" height="1.8" stroke="none" fill="#f0f0f0"/><rect x="480.2" y="63.4" width="1.4" height="1.8" stroke="none" fill="#f0f0f0"/><rect x="483" y="72" width="4" height="6" stroke="none" /><rect x="484.5" y="69" width="1" height="3" stroke="none" /><path d="M485 67.3L483 69.8H487Z" stroke="none"/></g><g fill="#a0a0a0" stroke="#a0a0a0"><rect x="473" y="62" width="10" height="5.5" stroke="none" /><rect x="474.2" y="63.4" width="1.4" height="1.8" stroke="none" fill="#f0f0f0"/><rect x="477.2" y="63.4" width="1.4" height="1.8" stroke="none" fill="#f0f0f0"/><rect x="480.2" y="63.4" width="1.4" height="1.8" stroke="none" fill="#f0f0f0"/><rect x="483" y="72" width="4" height="6" stroke="none" /><rect x="484.5" y="69" width="1" height="3" stroke="none" /><path d="M485 67.3L483 69.8H487Z" stroke="none"/></g><path d="M509 67.5L510 66.8L512 71.5L514.5 62.6H525" fill="none" stroke="#9a30c0" stroke-width="1.3"/><path d="M514.5 62.5H525" stroke="#d040b0" stroke-width="1.1"/><text transform="translate(515.6,70.6) scale(1.18,1)" font-family="Liberation Sans" font-size="11" font-weight="700" fill="#1238d0">α</text><path d="M514.8 71.2h3.4v2.6h1.9l-3.6 3.7-3.6-3.7h1.9z" fill="#3468e4" stroke="#2040b8" stroke-width=".5"/><path d="M543 67.5L544 66.8L546 71.5L548.5 62.6H559" fill="none" stroke="#9a30c0" stroke-width="1.3"/><path d="M548.5 62.5H559" stroke="#d040b0" stroke-width="1.1"/><text transform="translate(549.6,70.6) scale(1.18,1)" font-family="Liberation Sans" font-size="11" font-weight="700" fill="#1238d0">α</text><path d="M548.1 77h3.4v-2.6h1.9l-3.6-3.7-3.6 3.7h1.9z" fill="#3468e4" stroke="#2040b8" stroke-width=".5"/><rect x="581" y="63" width="14" height="14" fill="#2453c9"/><path d="M588 71H595V77H581V73.5H586Z" fill="#1d2f58"/><text x="581.6" y="70.4" font-family="Liberation Sans" font-size="11.5" font-weight="700" fill="#fff" letter-spacing="-.4">as</text><path d="M582.5 75.5H585.5L588 74L590 74.5L594 72" stroke="#fff" stroke-width="1.2" fill="none"/><path d="M582 76.2h12" stroke="#fff" stroke-width=".6"/><path d="M605.5 70.5L613.5 62.5L621.5 65.8L613.8 73.8Z" fill="#8c9cea" stroke="#5a6cd0" stroke-width=".8"/><path d="M605.5 70.5V72.5L613.5 76.5L614 73.8Z" fill="#dfe4fb" stroke="#5a6cd0" stroke-width=".7"/><path d="M613.5 62.5L615 62L622 65L621.5 65.8Z" fill="#6b7cdc"/><circle cx="616.8" cy="72.5" r="4.3" fill="#2a4cc0" stroke="#c9d2f6" stroke-width=".8"/><circle cx="616.8" cy="72.5" r="3" fill="#fff"/><text x="614.9" y="75.2" font-family="Liberation Sans" font-size="7.5" font-weight="700" fill="#2040b8">?</text><g transform="translate(1,1)" fill="#fff" stroke="#fff"><path d="M56 92.5L60.5 89H72V96.5H69.5V102.5H56Z" stroke="none"/><rect x="57" y="93" width="1" height="3.5" stroke="none" fill="#f0f0f0"/></g><g fill="#a0a0a0" stroke="#a0a0a0"><path d="M56 92.5L60.5 89H72V96.5H69.5V102.5H56Z" stroke="none"/><rect x="57" y="93" width="1" height="3.5" stroke="none" fill="#f0f0f0"/></g><g transform="translate(1,1)" fill="#fff" stroke="#fff"><path d="M94 91H103L107 88H109V102.5H94Z" stroke="none"/><rect x="100" y="96" width="1" height="1" stroke="none" fill="#f0f0f0"/></g><g fill="#a0a0a0" stroke="#a0a0a0"><path d="M94 91H103L107 88H109V102.5H94Z" stroke="none"/><rect x="100" y="96" width="1" height="1" stroke="none" fill="#f0f0f0"/></g><g transform="translate(1,1)" fill="#fff" stroke="#fff"><path d="M118 88L122 91H124L126 89L127.5 91H134V102.5H119V91L118 90Z" stroke="none"/></g><g fill="#a0a0a0" stroke="#a0a0a0"><path d="M118 88L122 91H124L126 89L127.5 91H134V102.5H119V91L118 90Z" stroke="none"/></g><g transform="translate(1,1)" fill="#fff" stroke="#fff"><path d="M143 89H152V91H159V102.5H144V91H143Z" stroke="none"/><rect x="144.5" y="90" width="2" height="1" stroke="none" fill="#f0f0f0"/></g><g fill="#a0a0a0" stroke="#a0a0a0"><path d="M143 89H152V91H159V102.5H144V91H143Z" stroke="none"/><rect x="144.5" y="90" width="2" height="1" stroke="none" fill="#f0f0f0"/></g><g transform="translate(1,1)" fill="#fff" stroke="#fff"><text x="181" y="99.5" font-family="Liberation Serif" font-size="16.5" font-weight="700" stroke-width=".6">A</text><rect x="181" y="101" width="13" height="2.5" stroke="none" /></g><g fill="#a0a0a0" stroke="#a0a0a0"><text x="181" y="99.5" font-family="Liberation Serif" font-size="16.5" font-weight="700" stroke-width=".6">A</text><rect x="181" y="101" width="13" height="2.5" stroke="none" /></g><g transform="translate(1,1)" fill="#fff" stroke="#fff"><path d="M220 88H223V90.5L227 94.5L222 99.5H218L215 96.5L220 91Z" stroke="none"/><rect x="220.8" y="89" width="1.3" height="1.3" stroke="none" fill="#f0f0f0"/><path d="M225.5 91.5Q230.5 91.5 230.5 99H228V96L226 94Z" stroke="none"/><rect x="215" y="101" width="13" height="2.5" stroke="none" /><rect x="216" y="101.8" width="11" height="1" stroke="none" fill="#f0f0f0"/></g><g fill="#a0a0a0" stroke="#a0a0a0"><path d="M220 88H223V90.5L227 94.5L222 99.5H218L215 96.5L220 91Z" stroke="none"/><rect x="220.8" y="89" width="1.3" height="1.3" stroke="none" fill="#f0f0f0"/><path d="M225.5 91.5Q230.5 91.5 230.5 99H228V96L226 94Z" stroke="none"/><rect x="215" y="101" width="13" height="2.5" stroke="none" /><rect x="216" y="101.8" width="11" height="1" stroke="none" fill="#f0f0f0"/></g><g transform="translate(1,1)" fill="#fff" stroke="#fff"><text x="263.8" y="100" font-family="Liberation Serif" font-size="13.5" font-weight="700" stroke-width=".7">F</text></g><g fill="#a0a0a0" stroke="#a0a0a0"><text x="263.8" y="100" font-family="Liberation Serif" font-size="13.5" font-weight="700" stroke-width=".7">F</text></g><g transform="translate(1,1)" fill="#fff" stroke="#fff"><text x="287" y="100" font-family="Liberation Serif" font-size="13.5" font-weight="700" font-style="italic" stroke-width=".7">K</text></g><g fill="#a0a0a0" stroke="#a0a0a0"><text x="287" y="100" font-family="Liberation Serif" font-size="13.5" font-weight="700" font-style="italic" stroke-width=".7">K</text></g><g transform="translate(1,1)" fill="#fff" stroke="#fff"><text x="312.8" y="100" font-family="Liberation Serif" font-size="13.5" font-weight="700" stroke-width=".7">U</text><rect x="313" y="101" width="9" height="1" stroke="none" /></g><g fill="#a0a0a0" stroke="#a0a0a0"><text x="312.8" y="100" font-family="Liberation Serif" font-size="13.5" font-weight="700" stroke-width=".7">U</text><rect x="313" y="101" width="9" height="1" stroke="none" /></g><path d="M553.5 93.5L557.5 97.5L561.5 93.5" stroke="#9c9c9c" stroke-width="1" fill="none"/><path d="M609.5 93.5L613.5 97.5L617.5 93.5" stroke="#9c9c9c" stroke-width="1" fill="none"/><g transform="translate(1,1)" fill="#fff" stroke="#fff"><path d="M11 114H20V119H22V126H19.5V128.5H11V126H6V121L11 116Z" stroke="none"/></g><g fill="#a0a0a0" stroke="#a0a0a0"><path d="M11 114H20V119H22V126H19.5V128.5H11V126H6V121L11 116Z" stroke="none"/></g><g transform="translate(1,1)" fill="#fff" stroke="#fff"><rect x="116" y="114" width="14" height="14.5" stroke="none" /></g><g fill="#a0a0a0" stroke="#a0a0a0"><rect x="116" y="114" width="14" height="14.5" stroke="none" /></g><g transform="translate(1,1)" fill="#fff" stroke="#fff"><rect x="152" y="115" width="2" height="14" stroke="none" /><rect x="152" y="127" width="15" height="2" stroke="none" /><rect x="157" y="116.5" width="1" height="6" stroke="none" /><path d="M157.5 115L155.7 117.3H159.3Z" stroke="none"/><path d="M157.5 124L155.7 121.7H159.3Z" stroke="none"/><rect x="160.5" y="124" width="5.5" height="1" stroke="none" /><path d="M159 124.5L161.3 122.7V126.3Z" stroke="none"/><path d="M167.5 124.5L165.2 122.7V126.3Z" stroke="none"/></g><g fill="#a0a0a0" stroke="#a0a0a0"><rect x="152" y="115" width="2" height="14" stroke="none" /><rect x="152" y="127" width="15" height="2" stroke="none" /><rect x="157" y="116.5" width="1" height="6" stroke="none" /><path d="M157.5 115L155.7 117.3H159.3Z" stroke="none"/><path d="M157.5 124L155.7 121.7H159.3Z" stroke="none"/><rect x="160.5" y="124" width="5.5" height="1" stroke="none" /><path d="M159 124.5L161.3 122.7V126.3Z" stroke="none"/><path d="M167.5 124.5L165.2 122.7V126.3Z" stroke="none"/></g><g transform="translate(1,1)" fill="#fff" stroke="#fff"><rect x="180" y="114.4" width="1" height="0.8" stroke="none" /><rect x="179" y="115.2" width="1" height="0.8" stroke="none" /><rect x="180" y="115.2" width="1" height="0.8" stroke="none" /><rect x="180" y="116.0" width="1" height="0.8" stroke="none" /><rect x="180" y="116.8" width="1" height="0.8" stroke="none" /><rect x="180" y="117.6" width="1" height="0.8" stroke="none" /><rect x="179" y="119.4" width="1" height="0.8" stroke="none" /><rect x="180" y="119.4" width="1" height="0.8" stroke="none" /><rect x="181" y="119.4" width="1" height="0.8" stroke="none" /><rect x="181" y="120.2" width="1" height="0.8" stroke="none" /><rect x="179" y="121.0" width="1" height="0.8" stroke="none" /><rect x="180" y="121.0" width="1" height="0.8" stroke="none" /><rect x="181" y="121.0" width="1" height="0.8" stroke="none" /><rect x="179" y="121.8" width="1" height="0.8" stroke="none" /><rect x="179" y="122.6" width="1" height="0.8" stroke="none" /><rect x="180" y="122.6" width="1" height="0.8" stroke="none" /><rect x="181" y="122.6" width="1" height="0.8" stroke="none" /><rect x="179" y="124.4" width="1" height="0.8" stroke="none" /><rect x="180" y="124.4" width="1" height="0.8" stroke="none" /><rect x="181" y="124.4" width="1" height="0.8" stroke="none" /><rect x="181" y="125.2" width="1" height="0.8" stroke="none" /><rect x="180" y="126.0" width="1" height="0.8" stroke="none" /><rect x="181" y="126.0" width="1" height="0.8" stroke="none" /><rect x="181" y="126.8" width="1" height="0.8" stroke="none" /><rect x="179" y="127.6" width="1" height="0.8" stroke="none" /><rect x="180" y="127.6" width="1" height="0.8" stroke="none" /><rect x="181" y="127.6" width="1" height="0.8" stroke="none" /><rect x="185" y="115" width="6" height="1" stroke="none" /><rect x="185" y="117.5" width="4" height="1" stroke="none" /><rect x="185" y="120" width="6" height="1" stroke="none" /><rect x="185" y="122.5" width="4" height="1" stroke="none" /><rect x="185" y="125" width="6" height="1" stroke="none" /><rect x="185" y="127.5" width="4" height="1" stroke="none" /></g><g fill="#a0a0a0" stroke="#a0a0a0"><rect x="180" y="114.4" width="1" height="0.8" stroke="none" /><rect x="179" y="115.2" width="1" height="0.8" stroke="none" /><rect x="180" y="115.2" width="1" height="0.8" stroke="none" /><rect x="180" y="116.0" width="1" height="0.8" stroke="none" /><rect x="180" y="116.8" width="1" height="0.8" stroke="none" /><rect x="180" y="117.6" width="1" height="0.8" stroke="none" /><rect x="179" y="119.4" width="1" height="0.8" stroke="none" /><rect x="180" y="119.4" width="1" height="0.8" stroke="none" /><rect x="181" y="119.4" width="1" height="0.8" stroke="none" /><rect x="181" y="120.2" width="1" height="0.8" stroke="none" /><rect x="179" y="121.0" width="1" height="0.8" stroke="none" /><rect x="180" y="121.0" width="1" height="0.8" stroke="none" /><rect x="181" y="121.0" width="1" height="0.8" stroke="none" /><rect x="179" y="121.8" width="1" height="0.8" stroke="none" /><rect x="179" y="122.6" width="1" height="0.8" stroke="none" /><rect x="180" y="122.6" width="1" height="0.8" stroke="none" /><rect x="181" y="122.6" width="1" height="0.8" stroke="none" /><rect x="179" y="124.4" width="1" height="0.8" stroke="none" /><rect x="180" y="124.4" width="1" height="0.8" stroke="none" /><rect x="181" y="124.4" width="1" height="0.8" stroke="none" /><rect x="181" y="125.2" width="1" height="0.8" stroke="none" /><rect x="180" y="126.0" width="1" height="0.8" stroke="none" /><rect x="181" y="126.0" width="1" height="0.8" stroke="none" /><rect x="181" y="126.8" width="1" height="0.8" stroke="none" /><rect x="179" y="127.6" width="1" height="0.8" stroke="none" /><rect x="180" y="127.6" width="1" height="0.8" stroke="none" /><rect x="181" y="127.6" width="1" height="0.8" stroke="none" /><rect x="185" y="115" width="6" height="1" stroke="none" /><rect x="185" y="117.5" width="4" height="1" stroke="none" /><rect x="185" y="120" width="6" height="1" stroke="none" /><rect x="185" y="122.5" width="4" height="1" stroke="none" /><rect x="185" y="125" width="6" height="1" stroke="none" /><rect x="185" y="127.5" width="4" height="1" stroke="none" /></g><g transform="translate(1,1)" fill="#fff" stroke="#fff"><rect x="203.0" y="115" width="1" height="6" stroke="none" /><rect x="205.5" y="117" width="1" height="4" stroke="none" /><rect x="208.0" y="115" width="1" height="6" stroke="none" /><rect x="210.5" y="117" width="1" height="4" stroke="none" /><rect x="213.0" y="115" width="1" height="6" stroke="none" /><rect x="215.5" y="117" width="1" height="4" stroke="none" /><rect x="204.5" y="123" width="1" height="1" stroke="none" /><rect x="203.5" y="124" width="1" height="1" stroke="none" /><rect x="204.5" y="124" width="1" height="1" stroke="none" /><rect x="204.5" y="125" width="1" height="1" stroke="none" /><rect x="204.5" y="126" width="1" height="1" stroke="none" /><rect x="204.5" y="127" width="1" height="1" stroke="none" /><rect x="208" y="123" width="1" height="1" stroke="none" /><rect x="209" y="123" width="1" height="1" stroke="none" /><rect x="210" y="123" width="1" height="1" stroke="none" /><rect x="210" y="124" width="1" height="1" stroke="none" /><rect x="208" y="125" width="1" height="1" stroke="none" /><rect x="209" y="125" width="1" height="1" stroke="none" /><rect x="210" y="125" width="1" height="1" stroke="none" /><rect x="208" y="126" width="1" height="1" stroke="none" /><rect x="208" y="127" width="1" height="1" stroke="none" /><rect x="209" y="127" width="1" height="1" stroke="none" /><rect x="210" y="127" width="1" height="1" stroke="none" /><rect x="213" y="123" width="1" height="1" stroke="none" /><rect x="214" y="123" width="1" height="1" stroke="none" /><rect x="215" y="123" width="1" height="1" stroke="none" /><rect x="215" y="124" width="1" height="1" stroke="none" /><rect x="214" y="125" width="1" height="1" stroke="none" /><rect x="215" y="125" width="1" height="1" stroke="none" /><rect x="215" y="126" width="1" height="1" stroke="none" /><rect x="213" y="127" width="1" height="1" stroke="none" /><rect x="214" y="127" width="1" height="1" stroke="none" /><rect x="215" y="127" width="1" height="1" stroke="none" /></g><g fill="#a0a0a0" stroke="#a0a0a0"><rect x="203.0" y="115" width="1" height="6" stroke="none" /><rect x="205.5" y="117" width="1" height="4" stroke="none" /><rect x="208.0" y="115" width="1" height="6" stroke="none" /><rect x="210.5" y="117" width="1" height="4" stroke="none" /><rect x="213.0" y="115" width="1" height="6" stroke="none" /><rect x="215.5" y="117" width="1" height="4" stroke="none" /><rect x="204.5" y="123" width="1" height="1" stroke="none" /><rect x="203.5" y="124" width="1" height="1" stroke="none" /><rect x="204.5" y="124" width="1" height="1" stroke="none" /><rect x="204.5" y="125" width="1" height="1" stroke="none" /><rect x="204.5" y="126" width="1" height="1" stroke="none" /><rect x="204.5" y="127" width="1" height="1" stroke="none" /><rect x="208" y="123" width="1" height="1" stroke="none" /><rect x="209" y="123" width="1" height="1" stroke="none" /><rect x="210" y="123" width="1" height="1" stroke="none" /><rect x="210" y="124" width="1" height="1" stroke="none" /><rect x="208" y="125" width="1" height="1" stroke="none" /><rect x="209" y="125" width="1" height="1" stroke="none" /><rect x="210" y="125" width="1" height="1" stroke="none" /><rect x="208" y="126" width="1" height="1" stroke="none" /><rect x="208" y="127" width="1" height="1" stroke="none" /><rect x="209" y="127" width="1" height="1" stroke="none" /><rect x="210" y="127" width="1" height="1" stroke="none" /><rect x="213" y="123" width="1" height="1" stroke="none" /><rect x="214" y="123" width="1" height="1" stroke="none" /><rect x="215" y="123" width="1" height="1" stroke="none" /><rect x="215" y="124" width="1" height="1" stroke="none" /><rect x="214" y="125" width="1" height="1" stroke="none" /><rect x="215" y="125" width="1" height="1" stroke="none" /><rect x="215" y="126" width="1" height="1" stroke="none" /><rect x="213" y="127" width="1" height="1" stroke="none" /><rect x="214" y="127" width="1" height="1" stroke="none" /><rect x="215" y="127" width="1" height="1" stroke="none" /></g><g transform="translate(1,1)" fill="#fff" stroke="#fff"><rect x="227" y="115" width="2" height="14" stroke="none" /><rect x="227" y="127" width="15" height="2" stroke="none" /><rect x="230" y="118" width="12" height="2" stroke="none" /><rect x="230" y="121" width="12" height="2" stroke="none" /><rect x="230" y="124" width="12" height="2" stroke="none" /></g><g fill="#a0a0a0" stroke="#a0a0a0"><rect x="227" y="115" width="2" height="14" stroke="none" /><rect x="227" y="127" width="15" height="2" stroke="none" /><rect x="230" y="118" width="12" height="2" stroke="none" /><rect x="230" y="121" width="12" height="2" stroke="none" /><rect x="230" y="124" width="12" height="2" stroke="none" /></g><g transform="translate(1,1)" fill="#fff" stroke="#fff"><rect x="252" y="115" width="2" height="14" stroke="none" /><rect x="252" y="127" width="15" height="2" stroke="none" /><rect x="256" y="117" width="2" height="10" stroke="none" /><rect x="260" y="117" width="2" height="10" stroke="none" /><rect x="264" y="117" width="2" height="10" stroke="none" /></g><g fill="#a0a0a0" stroke="#a0a0a0"><rect x="252" y="115" width="2" height="14" stroke="none" /><rect x="252" y="127" width="15" height="2" stroke="none" /><rect x="256" y="117" width="2" height="10" stroke="none" /><rect x="260" y="117" width="2" height="10" stroke="none" /><rect x="264" y="117" width="2" height="10" stroke="none" /></g><g transform="translate(1,1)" fill="#fff" stroke="#fff"><rect x="296" y="115" width="8" height="8" stroke="none" /><rect x="292" y="120" width="7" height="5" stroke="none" /><rect x="289" y="125" width="4" height="3.5" stroke="none" /><path d="M290 119.5L293.5 116" fill="none" stroke-width="1"/><path d="M291.5 115.5H294V118" fill="none" stroke-width="1"/></g><g fill="#a0a0a0" stroke="#a0a0a0"><rect x="296" y="115" width="8" height="8" stroke="none" /><rect x="292" y="120" width="7" height="5" stroke="none" /><rect x="289" y="125" width="4" height="3.5" stroke="none" /><path d="M290 119.5L293.5 116" fill="none" stroke-width="1"/><path d="M291.5 115.5H294V118" fill="none" stroke-width="1"/></g><g transform="translate(1,1)" fill="#fff" stroke="#fff"><rect x="325" y="115" width="4" height="4" stroke="none" /><rect x="321" y="118" width="5" height="4" stroke="none" /><rect x="314.5" y="121" width="8.5" height="7.5" stroke="none" /><path d="M315 119.5L318.5 116" fill="none" stroke-width="1"/><path d="M316.5 115.5H319V118" fill="none" stroke-width="1"/></g><g fill="#a0a0a0" stroke="#a0a0a0"><rect x="325" y="115" width="4" height="4" stroke="none" /><rect x="321" y="118" width="5" height="4" stroke="none" /><rect x="314.5" y="121" width="8.5" height="7.5" stroke="none" /><path d="M315 119.5L318.5 116" fill="none" stroke-width="1"/><path d="M316.5 115.5H319V118" fill="none" stroke-width="1"/></g><g transform="translate(1,1)" fill="#fff" stroke="#fff"><path d="M366 116H373V123.5L369 127.5H362V119.5Z" stroke="none"/></g><g fill="#a0a0a0" stroke="#a0a0a0"><path d="M366 116H373V123.5L369 127.5H362V119.5Z" stroke="none"/></g><g transform="translate(1,1)" fill="#fff" stroke="#fff"><rect x="387" y="116" width="12" height="8.6" rx="3.6" stroke="none"/><path d="M389 123.5L387.3 127.7L393.5 124.4Z" stroke="none"/></g><g fill="#a0a0a0" stroke="#a0a0a0"><rect x="387" y="116" width="12" height="8.6" rx="3.6" stroke="none"/><path d="M389 123.5L387.3 127.7L393.5 124.4Z" stroke="none"/></g><g transform="translate(1,1)" fill="#fff" stroke="#fff"><path d="M416 116H423V123.5L419 127.5H412V119.5Z" stroke="none"/></g><g fill="#a0a0a0" stroke="#a0a0a0"><path d="M416 116H423V123.5L419 127.5H412V119.5Z" stroke="none"/></g><g transform="translate(1,1)" fill="#fff" stroke="#fff"><rect x="437" y="116" width="12" height="8.6" rx="3.6" stroke="none"/><path d="M439 123.5L437.3 127.7L443.5 124.4Z" stroke="none"/></g><g fill="#a0a0a0" stroke="#a0a0a0"><rect x="437" y="116" width="12" height="8.6" rx="3.6" stroke="none"/><path d="M439 123.5L437.3 127.7L443.5 124.4Z" stroke="none"/></g><g transform="translate(1,1)" fill="#fff" stroke="#fff"><path d="M460 116H467L463.5 120Z" stroke="none"/><path d="M468 116H475L471.5 120Z" stroke="none"/><rect x="460.0" y="122" width="1" height="6.5" stroke="none" /><rect x="462.5" y="124" width="1" height="4.5" stroke="none" /><rect x="465.0" y="124" width="1" height="4.5" stroke="none" /><rect x="467.5" y="122" width="1" height="6.5" stroke="none" /><rect x="470.0" y="124" width="1" height="4.5" stroke="none" /><rect x="472.5" y="124" width="1" height="4.5" stroke="none" /><rect x="475.0" y="122" width="1" height="6.5" stroke="none" /></g><g fill="#a0a0a0" stroke="#a0a0a0"><path d="M460 116H467L463.5 120Z" stroke="none"/><path d="M468 116H475L471.5 120Z" stroke="none"/><rect x="460.0" y="122" width="1" height="6.5" stroke="none" /><rect x="462.5" y="124" width="1" height="4.5" stroke="none" /><rect x="465.0" y="124" width="1" height="4.5" stroke="none" /><rect x="467.5" y="122" width="1" height="6.5" stroke="none" /><rect x="470.0" y="124" width="1" height="4.5" stroke="none" /><rect x="472.5" y="124" width="1" height="4.5" stroke="none" /><rect x="475.0" y="122" width="1" height="6.5" stroke="none" /></g><g transform="translate(1,1)" fill="#fff" stroke="#fff"><rect x="487" y="116" width="12" height="8.6" rx="3.6" stroke="none"/><path d="M489 123.5L487.3 127.7L493.5 124.4Z" stroke="none"/></g><g fill="#a0a0a0" stroke="#a0a0a0"><rect x="487" y="116" width="12" height="8.6" rx="3.6" stroke="none"/><path d="M489 123.5L487.3 127.7L493.5 124.4Z" stroke="none"/></g><g transform="translate(1,1)" fill="#fff" stroke="#fff"><rect x="511" y="115" width="3" height="5.5" stroke="none" /><rect x="516" y="115" width="3" height="5.5" stroke="none" /><rect x="521" y="115" width="3" height="5.5" stroke="none" /><rect x="510.5" y="122" width="1" height="6.5" stroke="none" /><rect x="513.0" y="124" width="1" height="4.5" stroke="none" /><rect x="515.5" y="124" width="1" height="4.5" stroke="none" /><rect x="518.0" y="122" width="1" height="6.5" stroke="none" /><rect x="520.5" y="124" width="1" height="4.5" stroke="none" /><rect x="523.0" y="124" width="1" height="4.5" stroke="none" /><rect x="525.5" y="122" width="1" height="6.5" stroke="none" /></g><g fill="#a0a0a0" stroke="#a0a0a0"><rect x="511" y="115" width="3" height="5.5" stroke="none" /><rect x="516" y="115" width="3" height="5.5" stroke="none" /><rect x="521" y="115" width="3" height="5.5" stroke="none" /><rect x="510.5" y="122" width="1" height="6.5" stroke="none" /><rect x="513.0" y="124" width="1" height="4.5" stroke="none" /><rect x="515.5" y="124" width="1" height="4.5" stroke="none" /><rect x="518.0" y="122" width="1" height="6.5" stroke="none" /><rect x="520.5" y="124" width="1" height="4.5" stroke="none" /><rect x="523.0" y="124" width="1" height="4.5" stroke="none" /><rect x="525.5" y="122" width="1" height="6.5" stroke="none" /></g><g transform="translate(1,1)" fill="#fff" stroke="#fff"><rect x="537" y="116" width="12" height="8.6" rx="3.6" stroke="none"/><path d="M539 123.5L537.3 127.7L543.5 124.4Z" stroke="none"/></g><g fill="#a0a0a0" stroke="#a0a0a0"><rect x="537" y="116" width="12" height="8.6" rx="3.6" stroke="none"/><path d="M539 123.5L537.3 127.7L543.5 124.4Z" stroke="none"/></g><g transform="translate(1,1)" fill="#fff" stroke="#fff"><path d="M573.5 117L575.8 114.8V126H588V128.5H573.5Z" stroke="none"/><path d="M577 124.5L585 116.5M577 120.5L581 116.5M581.5 124.5L586 120" fill="none" stroke-width="1"/><circle cx="579" cy="119" r="1.1" stroke="none"/><circle cx="584" cy="122.5" r="1.1" stroke="none"/></g><g fill="#a0a0a0" stroke="#a0a0a0"><path d="M573.5 117L575.8 114.8V126H588V128.5H573.5Z" stroke="none"/><path d="M577 124.5L585 116.5M577 120.5L581 116.5M581.5 124.5L586 120" fill="none" stroke-width="1"/><circle cx="579" cy="119" r="1.1" stroke="none"/><circle cx="584" cy="122.5" r="1.1" stroke="none"/></g><g transform="translate(1,1)" fill="#fff" stroke="#fff"><path d="M598.5 117L600.8 114.8V126H613V128.5H598.5Z" stroke="none"/><rect x="602" y="120" width="10.5" height="1" stroke="none" /><path d="M603 118Q607 114.5 611 118M603 123Q607 126 611 123" fill="none" stroke-width="1" stroke-dasharray="1.2 1.2"/></g><g fill="#a0a0a0" stroke="#a0a0a0"><path d="M598.5 117L600.8 114.8V126H613V128.5H598.5Z" stroke="none"/><rect x="602" y="120" width="10.5" height="1" stroke="none" /><path d="M603 118Q607 114.5 611 118M603 123Q607 126 611 123" fill="none" stroke-width="1" stroke-dasharray="1.2 1.2"/></g><path d="M45.5 157.5H56.5V167.5H45.5Z" fill="url(#gDoc)" stroke="#9fb0d4"/><path d="M56.5 157.5V167.5H45.5" fill="none" stroke="#2d5c62" stroke-width="1.2"/><path d="M47 163.5h1.8M50 163.5h5M47 165.5h1.8M50 165.5h5" stroke="#8c9ac8" stroke-width="1"/><path d="M47 160.5L52 155.2L56 159.5L53.5 161.5L51.5 159.5L48.5 161.5Z" fill="#f3cf4a" stroke="#7d6a2a" stroke-width=".5" stroke-dasharray="1 1"/><path d="M52.5 154.8C55 153.8 58.5 154 59.2 156C59.5 158 57.5 159.5 55.5 159.2Z" fill="url(#gGold)"/><path d="M59 154H61.2V160.5L59 158Z" fill="#4f9a4c"/><rect x="49.5" y="194.5" width="7" height="7" fill="#fff" stroke="#1f4e54" stroke-width="1"/><rect x="49.0" y="194.0" width="8" height="3" fill="url(#gBlueT)"/><rect x="53.5" y="198" width="1" height="1" fill="#333"/><rect x="53.5" y="200" width="1" height="1" fill="#333"/><rect x="45.5" y="197.5" width="7" height="7" fill="#fff" stroke="#1f4e54" stroke-width="1"/><rect x="45.0" y="197.0" width="8" height="3" fill="url(#gBlueT)"/><rect x="47" y="201" width="1.2" height="1.2" fill="#333"/><rect x="50" y="201" width="1.2" height="1.2" fill="#333"/><rect x="47" y="203" width="1.2" height="1" fill="#333"/><rect x="50" y="203" width="1.2" height="1" fill="#333"/><path d="M52.5 208.5L59 202" stroke="#f2d23c" stroke-width="2.8"/><path d="M53.6 209.6L60 203.2" stroke="#111" stroke-width="1"/><path d="M58.6 201.5L60.3 203.2" stroke="#e4705a" stroke-width="3.2"/><path d="M51 210L51.8 207.5L53.6 209.3Z" fill="#ddd" stroke="#444" stroke-width=".5"/><rect x="45.5" y="235.5" width="15" height="14" fill="#fff" stroke="#8fa8d2"/><rect x="46" y="236" width="8" height="3.5" fill="#dfe6f7"/><rect x="46" y="239.3" width="8" height=".9" fill="#a9c0a0"/><path d="M47 241.5h5M47 243.5h5M47 245.5h5M47 247.5h5" stroke="#7d95d4" stroke-width="1"/><rect x="54" y="235" width="7" height="15" fill="#25478e"/><path d="M55.5 236.3h4l-2 2z" fill="#fff"/><rect x="55" y="240" width="5" height="4" fill="#e6ebf8"/><rect x="55" y="245" width="5" height="4" fill="#e6ebf8"/><path d="M55.8 243l1.7-1.8 1.7 1.8z" fill="#123"/><path d="M55.8 246l1.7 1.8 1.7-1.8z" fill="#123"/><path d="M60.7 235v15H45" fill="none" stroke="#1f5054" stroke-width="1.2"/><rect x="45.5" y="276.5" width="8" height="8" rx=".8" fill="#fff" stroke="#93a6cf"/><path d="M53.5 277.3V284.5H46.3" fill="none" stroke="#21545a" stroke-width="1.1"/><rect x="47.5" y="278.5" width="8" height="8" rx=".8" fill="#fff" stroke="#93a6cf"/><path d="M55.5 279.3V286.5H48.3" fill="none" stroke="#21545a" stroke-width="1.1"/><rect x="49.5" y="280.5" width="8" height="8" rx=".8" fill="#fff" stroke="#93a6cf"/><path d="M57.5 281.3V288.5H50.3" fill="none" stroke="#21545a" stroke-width="1.1"/><rect x="51.5" y="282.5" width="8" height="8" rx=".8" fill="#fff" stroke="#93a6cf"/><path d="M59.5 283.3V290.5H52.3" fill="none" stroke="#21545a" stroke-width="1.1"/><path d="M53 284.5h2M56 284.5h2M53 286.5h2M56 286.5h2M53 288.5h2M56 288.5h2" stroke="#7d90d6" stroke-width="1"/><path d="M45.5 331.5V320.5L48.5 317.3V323.5" fill="#f4f6fb" stroke="#21525e" stroke-width="1.3" stroke-linejoin="round"/><path d="M45.5 331.2L46.8 332.3H58.8L60.6 330" fill="none" stroke="#21525e" stroke-width="1.3"/><rect x="47.3" y="323.5" width="3.6" height="7" fill="#3f78e8"/><rect x="47.3" y="323.5" width="3.6" height="7" fill="url(#gBar)"/><rect x="47.3" y="323.3" width="3.6" height="1" fill="#e8f0ff"/><rect x="47" y="324" width=".8" height="6.5" fill="#1828a0"/><rect x="51.3" y="318" width="4.4" height="12.5" fill="#f5c21c"/><rect x="51.3" y="318" width="4.4" height="12.5" fill="url(#gBar)"/><rect x="51.3" y="317.8" width="4.4" height="1.2" fill="#fff6d0" stroke="#a86a28" stroke-width=".5"/><rect x="55.8" y="320" width="4.2" height="10.5" fill="#e0502a"/><rect x="55.8" y="320" width="4.2" height="10.5" fill="url(#gBar)"/><rect x="55.8" y="320" width="4.2" height="1.1" fill="#f8d0c8"/><rect x="59.3" y="320.5" width=".9" height="10" fill="#7c1c08"/><g transform="translate(119,173)"><rect x="0" y="0.5" width="12.5" height="12.5" fill="#7c9be2"/><rect x="0" y="12" width="12.5" height="1.2" fill="#4c5cc0"/><rect x="1" y="3.2" width="2.8" height="2" fill="#fff"/><rect x="1" y="6.4" width="2.8" height="2" fill="#fff"/><rect x="1" y="9.600000000000001" width="2.8" height="2" fill="#fff"/><rect x="5" y="3.2" width="2.8" height="2" fill="#fff"/><rect x="5" y="6.4" width="2.8" height="2" fill="#fff"/><rect x="5" y="9.600000000000001" width="2.8" height="2" fill="#fff"/><rect x="9" y="3.2" width="2.8" height="2" fill="#fff"/><rect x="9" y="6.4" width="2.8" height="2" fill="#fff"/><rect x="9" y="9.600000000000001" width="2.8" height="2" fill="#fff"/><path d="M5.5 9.5 L12.2 2" stroke="#e8c648" stroke-width="2.6"/><path d="M6.3 10.3 L13 2.8" stroke="#6a5a20" stroke-width=".8"/><path d="M11.6 1.4 L13.6 3.2" stroke="#e47a78" stroke-width="2.6"/><path d="M4.6 10.8 l1.8 -.4 l-1.3 -1.3z" fill="#222"/></g><g transform="translate(462,173)"><rect x="0" y="0.5" width="12.5" height="12.5" fill="#7c9be2"/><rect x="0" y="12" width="12.5" height="1.2" fill="#4c5cc0"/><rect x="1" y="3.2" width="2.8" height="2" fill="#fff"/><rect x="1" y="6.4" width="2.8" height="2" fill="#fff"/><rect x="1" y="9.600000000000001" width="2.8" height="2" fill="#fff"/><rect x="5" y="3.2" width="2.8" height="2" fill="#fff"/><rect x="5" y="6.4" width="2.8" height="2" fill="#fff"/><rect x="5" y="9.600000000000001" width="2.8" height="2" fill="#fff"/><rect x="9" y="3.2" width="2.8" height="2" fill="#fff"/><rect x="9" y="6.4" width="2.8" height="2" fill="#fff"/><rect x="9" y="9.600000000000001" width="2.8" height="2" fill="#fff"/><path d="M5.5 9.5 L12.2 2" stroke="#e8c648" stroke-width="2.6"/><path d="M6.3 10.3 L13 2.8" stroke="#6a5a20" stroke-width=".8"/><path d="M11.6 1.4 L13.6 3.2" stroke="#e47a78" stroke-width="2.6"/><path d="M4.6 10.8 l1.8 -.4 l-1.3 -1.3z" fill="#222"/></g></svg>
</body></html>
